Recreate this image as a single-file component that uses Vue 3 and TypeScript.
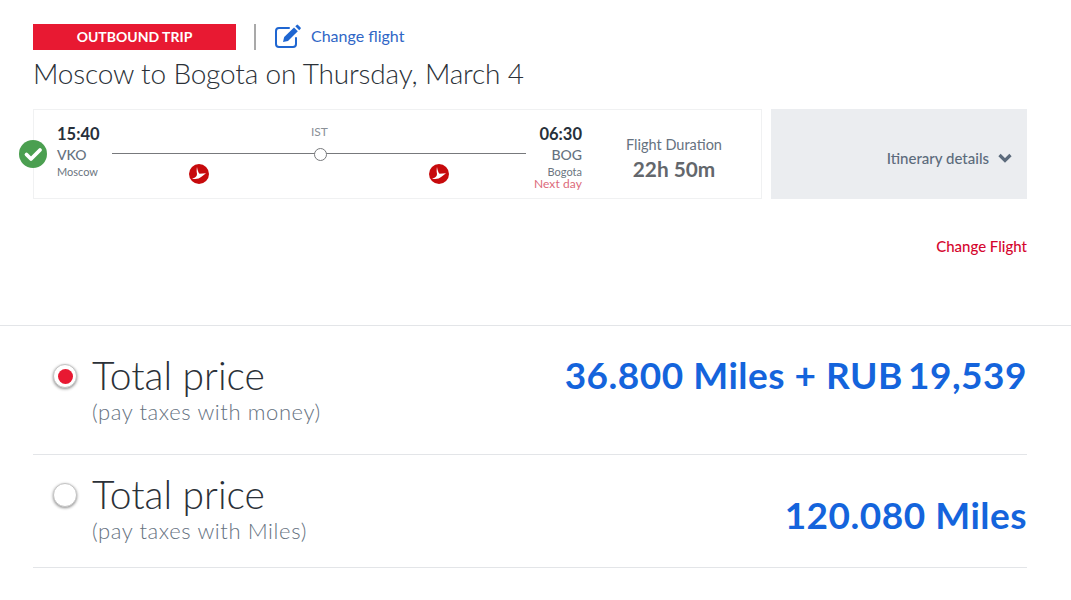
<script setup lang="ts">
interface PriceOption {
  id: string
  note: string
  price: string
  selected: boolean
}

const options: PriceOption[] = [
  { id: 'money', note: '(pay taxes with money)', price: '36.800 Miles + RUB\u200919,539', selected: true },
  { id: 'miles', note: '(pay taxes with Miles)', price: '120.080 Miles', selected: false }
]
</script>

<template>
  <main class="page">
    <section class="top">
      <div class="head">
        <div class="badge">OUTBOUND TRIP</div>
        <div class="sep"></div>
        <a class="change-link">
          <svg class="edit" viewBox="0 0 28 24" width="28" height="24" fill="none">
            <path d="M15 4H5a3 3 0 0 0-3 3v13a3 3 0 0 0 3 3h14a3 3 0 0 0 3-3v-6" stroke="#1f66d1" stroke-width="2" stroke-linecap="round" />
            <path d="M9 18l1.200-5L20 3.500l3.800 3.800L14 17z" fill="#1f66d1" />
            <path d="M21.300 2.300l1.400-1.400a1 1 0 0 1 1.300 0l2.600 2.600a1 1 0 0 1 0 1.300L25.200 6.200z" fill="#1f66d1" />
          </svg>
          <span>Change flight</span>
        </a>
      </div>
      <h1 class="title">Moscow to Bogota on Thursday, March 4</h1>

      <div class="flight-row">
        <div class="card">
          <svg class="check" viewBox="0 0 28 28" width="28" height="28">
            <circle cx="14" cy="14" r="14" fill="#4b9f50" />
            <path d="M7.500 14.500l4.500 4.500 9-9" fill="none" stroke="#fff" stroke-width="3.800" stroke-linecap="round" stroke-linejoin="round" />
          </svg>
          <div class="port port-start">
            <div class="time">15:40</div>
            <div class="code">VKO</div>
            <div class="city">Moscow</div>
          </div>
          <div class="route">
            <div class="stop">IST</div>
            <div class="track">
              <span class="dot"></span>
            </div>
            <div class="carriers">
              <svg v-for="n in 2" :key="n" class="logo" viewBox="0 0 20 20" width="20" height="20">
                <circle cx="10" cy="10" r="10" fill="#c70a0c" />
                <path d="M8 3C8.500 6 9 8 10.500 9.800L17 9.300 12.800 12.500C10 15 6 15.600 3 14.500 6 14 8 12.500 8 10 7.500 8 7.500 5 8 3z" fill="#fff" />
              </svg>
            </div>
          </div>
          <div class="port port-end">
            <div class="time">06:30</div>
            <div class="code">BOG</div>
            <div class="city">Bogota</div>
            <div class="next">Next day</div>
          </div>
          <div class="duration">
            <div class="dur-label">Flight Duration</div>
            <div class="dur-value">22h 50m</div>
          </div>
        </div>
        <div class="itinerary">
          <span>Itinerary details</span>
          <svg viewBox="0 0 14 10" width="14" height="10">
            <path d="M1.500 2l5.500 5.500L12.500 2" fill="none" stroke="#5c6b7c" stroke-width="3.200" />
          </svg>
        </div>
      </div>
      <div class="change-row">Change Flight</div>
    </section>

    <section class="prices">
      <div v-for="o in options" :key="o.id" class="option">
        <span class="radio" :class="{ on: o.selected }"></span>
        <div class="labels">
          <div class="total">Total price</div>
          <div class="note">{{ o.note }}</div>
        </div>
        <div class="price">{{ o.price }}</div>
      </div>
    </section>
  </main>
</template>

<style>
html, body { background: #fff; }
</style>

<style scoped>
.page {
  width: 1071px;
  height: 600px;
  overflow: hidden;
  font-family: Lato, "Liberation Sans", sans-serif;
  color: #2b3138;
  box-sizing: border-box;
}
.top {
  padding: 24px 44px 0 33px;
  height: 301px;
  box-sizing: content-box;
  border-bottom: 1px solid #e3e5e8;
}
.head {
  display: flex;
  align-items: center;
  height: 26px;
}
.badge {
  width: 203px;
  height: 26px;
  background: #e81932;
  color: #fff;
  font-size: 14px;
  font-weight: 700;
  line-height: 26px;
  text-align: center;
}
.sep {
  width: 2px;
  height: 26px;
  background: #a9a9a9;
  margin: 0 18px;
}
.change-link {
  display: flex;
  align-items: center;
  gap: 9px;
  color: #2f66c6;
  font-size: 16px;
  margin-top: -3px;
}
.title {
  margin: 6px 0 0;
  font-size: 28px;
  line-height: 35px;
  font-weight: 300;
  letter-spacing: -0.17px;
  color: #2b3138;
}
.flight-row {
  display: flex;
  gap: 9px;
  margin-top: 18px;
  height: 90px;
}
.card {
  position: relative;
  width: 729px;
  box-sizing: border-box;
  border: 1px solid #f0f1f2;
  display: flex;
  padding: 14px 0 0 23px;
}
.check {
  position: absolute;
  left: -15px;
  top: 30px;
}
.port { width: 56px; }
.port-start { width: 55px; }
.port-end { text-align: right; }
.time {
  font-size: 16.500px;
  line-height: 20px;
  font-weight: 700;
  color: #27303a;
}
.code {
  font-size: 14px;
  line-height: 22px;
  color: #66727f;
  font-weight: 500;
}
.city {
  font-size: 11px;
  line-height: 12px;
  color: #6b7580;
}
.next {
  font-size: 12px;
  line-height: 12px;
  letter-spacing: 0.1px;
  color: #dc6a7a;
}
.route {
  position: relative;
  width: 414px;
  height: 70px;
}
.stop {
  position: absolute;
  left: 199px;
  top: 0;
  font-size: 12px;
  color: #8a9097;
}
.track {
  position: absolute;
  left: 0;
  right: 0;
  top: 29px;
  height: 1px;
  background: #77797c;
}
.dot {
  position: absolute;
  left: 202px;
  top: -5px;
  width: 13px;
  height: 13px;
  box-sizing: border-box;
  border: 1px solid #77797c;
  border-radius: 50%;
  background: #fff;
}
.carriers {
  position: absolute;
  top: 40px;
  left: 77px;
  display: flex;
  gap: 220px;
}
.duration {
  width: 136px;
  margin-left: 24px;
  text-align: center;
  padding-top: 11px;
}
.dur-label {
  font-size: 14.500px;
  line-height: 19px;
  color: #66727f;
}
.dur-value {
  font-size: 20.800px;
  line-height: 30px;
  font-weight: 700;
  color: #63676c;
}
.itinerary {
  flex: 1;
  background: #ebedf0;
  display: flex;
  align-items: center;
  justify-content: flex-end;
  gap: 9px;
  padding: 8px 15px 0 0;
  font-size: 15px;
  font-weight: 500;
  color: #5c6b7c;
  box-sizing: border-box;
}
.change-row {
  margin-top: 39px;
  text-align: right;
  font-size: 15px;
  line-height: 17px;
  font-weight: 500;
  color: #d5062e;
}
.prices {
  padding: 0 44px 0 33px;
}
.option {
  display: flex;
  align-items: flex-start;
  border-bottom: 1px solid #e3e5e8;
  padding-top: 26px;
  height: 102px;
}
.option + .option {
  padding-top: 16px;
  height: 96px;
}
.option + .option .price {
  margin-top: 21px;
}
.radio {
  width: 24px;
  height: 24px;
  box-sizing: border-box;
  margin: 12px 15px 0 20px;
  border-radius: 50%;
  border: 1px solid #c4c4c4;
  background: #fff;
  box-shadow: 0 1px 3px rgba(0, 0, 0, 0.45);
  position: relative;
}
.radio.on::after {
  content: "";
  position: absolute;
  left: 3.500px;
  top: 3.500px;
  width: 15px;
  height: 15px;
  border-radius: 50%;
  background: #e81932;
}
.total {
  font-size: 39px;
  line-height: 46px;
  font-weight: 300;
  color: #2b3138;
}
.note {
  font-size: 22px;
  line-height: 27px;
  font-weight: 300;
  letter-spacing: 0.6px;
  color: #66727f;
}
.price {
  margin-left: auto;
  font-size: 37px;
  line-height: 46px;
  font-weight: 700;
  letter-spacing: 0.5px;
  color: #1464dc;
}
</style>
